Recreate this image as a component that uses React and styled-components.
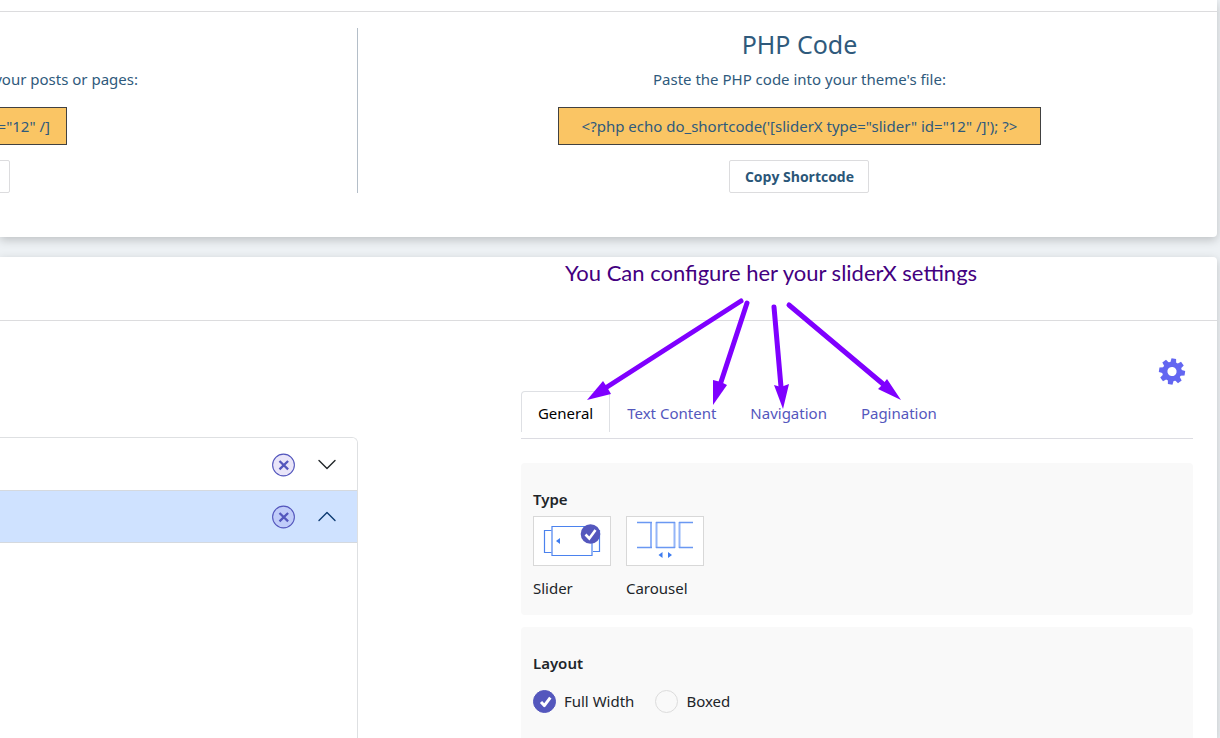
import React from "react";
import styled, { createGlobalStyle, css } from "styled-components";

const GlobalStyle = createGlobalStyle`
  *, *::before, *::after { box-sizing: border-box; }
  html, body { margin: 0; }
  body {
    background: #edf1f4;
    color: #212529;
    font-family: "Noto Sans", "Open Sans", sans-serif;
    font-size: 15px;
    line-height: 24px;
  }
  p, h2, h3 { margin: 0; }
`;

const Page = styled.main`
  display: flex;
  flex-direction: column;
  gap: 20px;
  height: 100vh;
  padding-right: 3px;
  overflow: hidden;
`;

const Card = styled.section`
  background: #fff;
  box-shadow: 0 3px 10px rgba(0, 0, 0, 0.2);
  border-radius: ${(p) => (p.$open ? "0 4px 0 0" : "0 0 4px 0")};
  ${(p) => p.$open && css`
    flex: 1;
    display: flex;
    flex-direction: column;
    min-height: 0;
  `}
`;

const CardHeader = styled.div`
  height: ${(p) => p.$height}px;
  flex: none;
  border-bottom: 1px solid #dcdcde;
`;

const Columns = styled.div`
  display: grid;
  grid-template-columns: minmax(0, 5fr) minmax(0, 12fr);
`;

const CodeColumns = styled(Columns)`
  padding: 16px 0 44px;
  color: #2f5a7c;
`;

const SettingsColumns = styled(Columns)`
  flex: 1;
  min-height: 0;
`;

const ShortcodeColumn = styled.div`
  padding-top: 39px;
  border-right: 1px solid #b4bec8;
`;

const PhpColumn = styled.div`
  display: flex;
  flex-direction: column;
  align-items: center;
  margin-left: 24px;
`;

const Scrolled = styled.div`
  display: flex;
  justify-content: flex-end;
  width: ${(p) => p.$width}px;
  overflow: hidden;
  white-space: nowrap;
`;

const CodeTitle = styled.h2`
  padding-bottom: 7px;
  font-size: 25px;
  font-weight: 400;
  line-height: 32px;
`;

const CodeHint = styled.p`
  margin-bottom: 16px;
`;

const CodeBox = styled.code`
  display: block;
  min-width: ${(p) => (p.$wide ? "483px" : "auto")};
  margin-bottom: 15px;
  padding: 6px 16px;
  border: 1px solid #414141;
  background: #fac564;
  font-family: inherit;
  text-align: center;
  white-space: nowrap;
`;

const CopyButton = styled.button`
  flex: none;
  width: 140px;
  height: 33px;
  padding: 0;
  border: 1px solid #dcdcde;
  border-radius: 2px;
  background: #fff;
  color: #2a5678;
  font: 700 14px/20px "Open Sans", "Noto Sans", sans-serif;
`;

const SlideList = styled.div`
  margin-top: 116px;
  border: solid #dee0e2;
  border-width: 1px 1px 0 0;
  border-top-right-radius: 6px;
  overflow: hidden;
`;

const SlideRow = styled.div`
  display: flex;
  align-items: center;
  justify-content: flex-end;
  gap: 20px;
  height: ${(p) => (p.$active ? 52 : 53)}px;
  padding: 1px 18px 0 0;
  border-bottom: 1px solid #d5d9de;
  background: ${(p) => (p.$active ? "#cfe2ff" : "#fff")};
  color: ${(p) => (p.$active ? "#0c3a72" : "#212529")};
`;

const IconButton = styled.button`
  display: grid;
  place-items: center;
  width: 24px;
  height: 24px;
  padding: 0;
  border: 0;
  background: none;
  color: inherit;
`;

const Settings = styled.div`
  position: relative;
  display: flex;
  flex-direction: column;
  min-height: 0;
  padding: 37px 24px 0 163px;
`;

const Toolbar = styled.div`
  display: flex;
  justify-content: flex-end;
  padding-right: 7px;
`;

const GearButton = styled(IconButton)`
  width: 28px;
  height: 28px;
`;

const Tabs = styled.nav`
  display: flex;
  margin-top: 5px;
  padding-bottom: 6px;
  border-bottom: 1px solid #dcdce2;
`;

const Tab = styled.a`
  height: 41px;
  padding: 9px 16px 0;
  border: solid transparent;
  border-width: 1px 1px 0;
  border-radius: 4px 4px 0 0;
  color: #5457bd;
  text-decoration: none;
  white-space: nowrap;
  ${(p) => p.$active && css`
    border-color: #dee0e4;
    background: #fff;
    color: #000;
  `}
`;

const Panel = styled.section`
  margin-top: ${(p) => (p.$fill ? 12 : 24)}px;
  padding: 24px 12px 15px;
  border-radius: 4px;
  background: #f9f9f9;
  ${(p) => p.$fill && css`
    flex: 1 0 auto;
    border-radius: 4px 4px 0 0;
  `}
`;

const PanelTitle = styled.h3`
  font-size: 15px;
  font-weight: 600;
  line-height: 24px;
`;

const TypeOptions = styled.div`
  display: flex;
  gap: 15px;
  margin-top: 5px;
`;

const TypeOption = styled.label`
  display: flex;
  flex-direction: column;
  gap: 10px;
  width: 78px;
`;

const Thumb = styled.span`
  display: grid;
  height: 50px;
  border: 1px solid #d8d8d8;
  background: #fff;
  > * { grid-area: 1 / 1; }
`;

const ThumbInput = styled.input`
  appearance: none;
  width: 100%;
  height: 100%;
  margin: 0;
`;

const LayoutOptions = styled.div`
  display: flex;
  gap: 21px;
  margin-top: 14px;
`;

const RadioLabel = styled.label`
  display: grid;
  grid-template-columns: 23px auto;
  column-gap: 8px;
  align-items: center;
`;

const RadioInput = styled.input`
  grid-area: 1 / 1;
  appearance: none;
  width: 23px;
  height: 23px;
  margin: 0;
  border: 1px solid #dcdcdc;
  border-radius: 50%;
  background: #f9f9f9;
  &:checked { border-color: #5457bd; background: #5457bd; }
`;

const RadioTick = styled.svg`
  grid-area: 1 / 1;
  pointer-events: none;
`;

const Note = styled.p`
  position: absolute;
  top: -64px;
  left: 207px;
  color: #430080;
  font: 400 22px/32px Lato, "Open Sans", sans-serif;
  white-space: nowrap;
`;

const Arrows = styled.svg`
  position: absolute;
  top: -31px;
  left: 213px;
  pointer-events: none;
`;

function RemoveIcon() {
  return (
    <svg width="24" height="24" viewBox="0 0 24 24" fill="none" stroke="#5457bd" aria-hidden="true">
      <circle cx="12.500" cy="12" r="10.900" fill="#6a4fd8" fillOpacity="0.15" strokeWidth="1.100" />
      <path d="M8.500 8l8.600 8.400M17.100 8L8.500 16.400" strokeWidth="2.300" />
    </svg>
  );
}

function Chevron({ up }) {
  return (
    <svg width="18" height="12" viewBox="0 0 18 12" fill="none" stroke="currentColor" strokeWidth="1.4" strokeLinecap="round" strokeLinejoin="round" aria-hidden="true">
      <path d={up ? "M1 9.5l8-8 8 8" : "M1 1.5l8 8 8-8"} />
    </svg>
  );
}

function GearIcon() {
  const teeth = [0, 45, 90, 135, 180, 225, 270, 315];
  return (
    <svg width="28" height="28" viewBox="-14 -13.500 28 28" aria-hidden="true">
      <g transform="rotate(8)">
        <circle r="7.2" fill="none" stroke="#6366f1" strokeWidth="5.2" />
        {teeth.map((a) => (
          <path key={a} d="M-3-8.5L-2.3-13H2.3L3-8.5Z" fill="#6366f1" transform={`rotate(${a})`} />
        ))}
      </g>
    </svg>
  );
}

function SliderDrawing() {
  return (
    <svg width="76" height="48" viewBox="0 0 76 48" fill="none" aria-hidden="true">
      <path d="M17.5 13.5h-7v22h7M59 13.5h6.500v21H59" stroke="#4b82ee" strokeWidth="1.200" />
      <path d="M18 9.500h40v29h-40z" stroke="#4b82ee" strokeWidth="1.200" />
      <path d="M26 21v6l-4-3z" fill="#3f7df0" />
      <circle cx="56.500" cy="17" r="9.800" fill="#5457bd" />
      <path d="M51.500 17.500l3.800 4 6.200-8.500" stroke="#fff" strokeWidth="2.600" />
    </svg>
  );
}

function CarouselDrawing() {
  return (
    <svg width="76" height="48" viewBox="0 0 76 48" fill="none" aria-hidden="true">
      <path d="M24 5v26M29.500 5v26M47.500 5v26M52.500 5v26" stroke="#94b5f8" strokeWidth="2" />
      <path d="M10 5.500h15M10 30.500h15M29 5.500h19M29 30.500h19M52 5.500h14M52 30.500h14" stroke="#6a98f2" strokeWidth="1.400" />
      <path d="M35.500 35v6l-4-3zM41 35v6l4-3z" fill="#3f7df0" />
    </svg>
  );
}

function Arrow({ from, to, neck, left, right }) {
  return (
    <g>
      <path d={`M${from}L${neck}`} fill="none" stroke="#7f00ff" strokeWidth="5" strokeLinecap="round" />
      <path d={`M${to}L${left}L${neck}L${right}Z`} fill="#7f00ff" />
    </g>
  );
}

const arrows = [
  { from: "170 11", neck: "36 97", to: "16 110", left: "32 91", right: "40 104" },
  { from: "176 13", neck: "150 92", to: "142 115", left: "142 90", right: "156 95" },
  { from: "203 17", neck: "210 97", to: "212 119", left: "203 95", right: "218 94" },
  { from: "218 15", neck: "312 94", to: "330 110", left: "307 99", right: "316 89" },
];

export default function App() {
  return (
    <Page>
      <GlobalStyle />
      <Card>
        <CardHeader $height={12} />
        <CodeColumns>
          <ShortcodeColumn>
            <Scrolled $width={138}>
              <CodeHint>your posts or pages:</CodeHint>
            </Scrolled>
            <Scrolled $width={67}>
              <CodeBox>="12" /]</CodeBox>
            </Scrolled>
            <Scrolled $width={10}>
              <CopyButton type="button" aria-label="Copy Shortcode" />
            </Scrolled>
          </ShortcodeColumn>
          <PhpColumn>
            <CodeTitle>PHP Code</CodeTitle>
            <CodeHint>Paste the PHP code into your theme's file:</CodeHint>
            <CodeBox $wide>{`<?php echo do_shortcode('[sliderX type="slider" id="12" /]'); ?>`}</CodeBox>
            <CopyButton type="button">Copy Shortcode</CopyButton>
          </PhpColumn>
        </CodeColumns>
      </Card>

      <Card $open>
        <CardHeader $height={64} />
        <SettingsColumns>
          <SlideList>
            <SlideRow>
              <IconButton type="button" aria-label="Remove slide"><RemoveIcon /></IconButton>
              <IconButton type="button" aria-label="Expand slide"><Chevron /></IconButton>
            </SlideRow>
            <SlideRow $active>
              <IconButton type="button" aria-label="Remove slide"><RemoveIcon /></IconButton>
              <IconButton type="button" aria-label="Collapse slide"><Chevron up /></IconButton>
            </SlideRow>
          </SlideList>

          <Settings>
            <Toolbar>
              <GearButton type="button" aria-label="Settings"><GearIcon /></GearButton>
            </Toolbar>
            <Tabs>
              <Tab href="#general" $active>General</Tab>
              <Tab href="#text">Text Content</Tab>
              <Tab href="#navigation">Navigation</Tab>
              <Tab href="#pagination">Pagination</Tab>
            </Tabs>
            <Panel>
              <PanelTitle>Type</PanelTitle>
              <TypeOptions>
                <TypeOption>
                  <Thumb>
                    <ThumbInput type="radio" name="type" defaultChecked />
                    <SliderDrawing />
                  </Thumb>
                  Slider
                </TypeOption>
                <TypeOption>
                  <Thumb>
                    <ThumbInput type="radio" name="type" />
                    <CarouselDrawing />
                  </Thumb>
                  Carousel
                </TypeOption>
              </TypeOptions>
            </Panel>
            <Panel $fill>
              <PanelTitle>Layout</PanelTitle>
              <LayoutOptions>
                <RadioLabel>
                  <RadioInput type="radio" name="layout" defaultChecked />
                  <RadioTick width="23" height="23" viewBox="0 0 23 23" fill="none" aria-hidden="true">
                    <path d="M8 12l3.300 3.600 6-8" stroke="#fff" strokeWidth="3" strokeLinejoin="round" />
                  </RadioTick>
                  Full Width
                </RadioLabel>
                <RadioLabel>
                  <RadioInput type="radio" name="layout" />
                  Boxed
                </RadioLabel>
              </LayoutOptions>
            </Panel>
            <Note>You Can configure her your sliderX settings</Note>
            <Arrows width="345" height="125" viewBox="0 0 345 125" aria-hidden="true">
              {arrows.map((a) => <Arrow key={a.from} {...a} />)}
            </Arrows>
          </Settings>
        </SettingsColumns>
      </Card>
    </Page>
  );
}
